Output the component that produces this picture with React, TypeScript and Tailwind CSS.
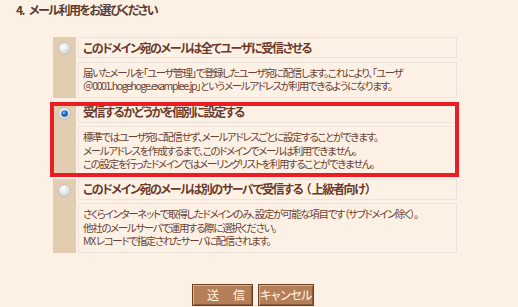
import React from "react";

function Radio({ checked }: { checked?: boolean }) {
  return (
    <svg width="13" height="13" viewBox="0 0 13 13">
      <defs>
        <radialGradient id={checked ? "rgc" : "rgu"} cx="0.4" cy="0.35" r="0.7">
          <stop offset="0" stopColor="#ffffff" />
          <stop offset="1" stopColor="#cfcfd2" />
        </radialGradient>
        <radialGradient id="blue" cx="0.4" cy="0.35" r="0.7">
          <stop offset="0" stopColor="#7fc4ff" />
          <stop offset="0.5" stopColor="#1c6fd0" />
          <stop offset="1" stopColor="#0b3f8a" />
        </radialGradient>
      </defs>
      <circle cx="6.5" cy="6.5" r="6" fill={`url(#${checked ? "rgc" : "rgu"})`} stroke="#b9b9be" strokeWidth="0.8" />
      {checked && <circle cx="6.5" cy="6.5" r="3.3" fill="url(#blue)" />}
    </svg>
  );
}

function Option({
  title,
  lines,
  checked,
  highlight,
  className,
}: {
  title: React.ReactNode;
  lines: string[];
  checked?: boolean;
  highlight?: boolean;
  className?: string;
}) {
  return (
    <div className={`relative flex ${className ?? ""}`}>
      <div className="w-[23px] shrink-0 bg-[#e2cdb0] flex justify-center pt-[5px]">
        <Radio checked={checked} />
      </div>
      <div className="ml-[2px] flex-1 flex flex-col gap-[3.5px]">
        <div className="h-[21px] border border-[#efe2da] px-[4px] flex items-center text-[12px] leading-[14px] font-bold text-[#6a3a2b] tracking-[-1.4px] whitespace-nowrap">
          {title}
        </div>
        <div className="border border-[#efe2da] pt-[3px] pb-[4px] px-[4px] text-[10.5px] leading-[13.5px] text-[#6b4232] tracking-[-1.35px]">
          {lines.map((l, i) => (
            <div key={i} className="whitespace-nowrap">
              {l}
            </div>
          ))}
        </div>
      </div>
      {highlight && (
        <div className="absolute left-[-3px] right-[-2px] top-0 bottom-[-1px] border-4 border-[#ec1c24] pointer-events-none" />
      )}
    </div>
  );
}

export default function App() {
  return (
    <div
      className="w-[518px] h-[307px] bg-[#fdf1e5] overflow-hidden"
      style={{ fontFamily: '"Noto Sans CJK JP", "Noto Sans", sans-serif', fontFeatureSettings: '"palt"' }}
    >
      <h2 className="pl-[16px] pt-[3px] text-[12px] leading-[14px] font-bold text-[#5b3a2c] tracking-[-1.5px]">
        <span className="mr-[5px]">4.</span>メール利用をお選びください
      </h2>
      <div className="ml-[53px] mt-[20px] w-[404px] flex flex-col">
        <Option
          title="このドメイン宛のメールは全てユーザに受信させる"
          lines={[
            "届いたメールを「ユーザ管理」で登録したユーザ宛に配信します。これにより、「ユーザ",
            "＠0001.hogehoge.examplee.jp」というメールアドレスが利用できるようになります。",
          ]}
        />
        <Option
          className="mt-[4px]"
          checked
          highlight
          title="受信するかどうかを個別に設定する"
          lines={[
            "標準ではユーザ宛に配信せず、メールアドレスごとに設定することができます。",
            "メールアドレスを作成するまで、このドメインでメールは利用できません。",
            "この設定を行ったドメインではメーリングリストを利用することができません。",
          ]}
        />
        <Option
          className="mt-[3px]"
          title={
            <>
              このドメイン宛のメールは別のサーバで受信する<span className="ml-[3px] mr-[2px]">（</span>上級者向け<span className="ml-[1px]">）</span>
            </>
          }
          lines={[
            "さくらインターネットで取得したドメインのみ、設定が可能な項目です（サブドメイン除く）。",
            "他社のメールサーバで運用する際に選択ください。",
            "MX レコードで指定されたサーバに配信されます。",
          ]}
        />
      </div>
      <div className="flex gap-[5px] pl-[192px] mt-[31px]">
        <button className="w-[61px] h-[22px] bg-[#b47f58] border border-[#6e3f20] shadow-[inset_1px_1px_0_#dcae8a,inset_-1px_-1px_0_#8b5a36] text-[12px] text-[#fff8ee] leading-none tracking-[14px] pl-[14px] whitespace-nowrap">
          送信
        </button>
        <button className="w-[56px] h-[22px] bg-[#b47f58] border border-[#6e3f20] shadow-[inset_1px_1px_0_#dcae8a,inset_-1px_-1px_0_#8b5a36] text-[12px] text-[#fff8ee] leading-none tracking-[-0.5px] whitespace-nowrap">
          キャンセル
        </button>
      </div>
    </div>
  );
}
